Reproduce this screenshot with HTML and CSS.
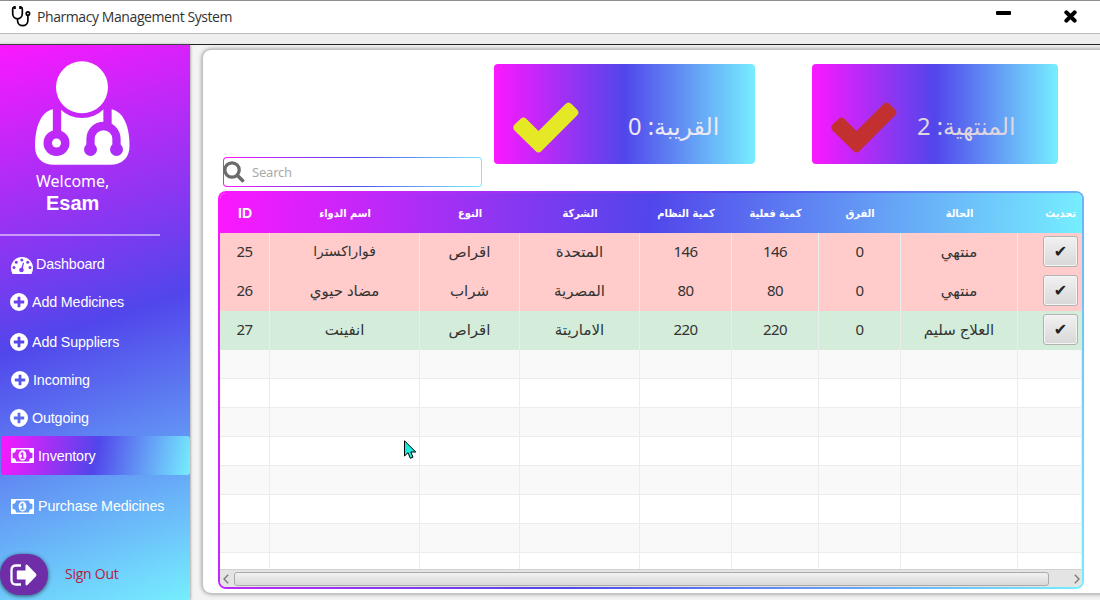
FILE: index.html
```html
<!DOCTYPE html>
<html lang="en">
<head>
<meta charset="utf-8">
<title>Pharmacy Management System</title>
<link rel="stylesheet" href="styles.css">
</head>
<body>
<svg class="defs" aria-hidden="true">
  <symbol id="plus" viewBox="0 0 18 18"><path fill-rule="evenodd" d="M9 0a9 9 0 1 1 0 18a9 9 0 0 1 0-18ZM7.600 3.800V7.600H3.800V10.400H7.600V14.200H10.400V10.400H14.200V7.600H10.400V3.800Z"/></symbol>
  <symbol id="money" viewBox="0 0 23 15"><path fill-rule="evenodd" d="M0 0H23V15H0ZM5 1.600A3.400 3.400 0 0 1 1.600 5V10A3.400 3.400 0 0 1 5 13.400H18A3.400 3.400 0 0 1 21.400 10V5A3.400 3.400 0 0 1 18 1.600Z"/><path fill-rule="evenodd" d="M11.500 2.400C14 2.400 15.400 4.900 15.400 7.500S14 12.600 11.500 12.600S7.600 10.100 7.600 7.500S9 2.400 11.500 2.400ZM11 4.300L9.200 5.900L10 6.900L10.800 6.300V9.600H9.500V10.800H13.500V9.600H12.300V4.300Z"/></symbol>
  <symbol id="check" viewBox="0 0 66 51"><path d="M8 16.500Q10.500 14.500 13 16.500L25.500 29L52.500 2Q55.500 -1 58.500 2L64 7.500Q67 10.500 64 13.500L28.500 49Q25.500 52 22.500 49L1.500 28.500Q-1 25.500 1.500 22.500Z"/></symbol>
</svg>
<div class="window">
  <header class="titlebar">
    <svg class="logo" viewBox="0 0 20 21"><g fill="none" stroke="#000" stroke-width="1.700"><path d="M4 1.500H2.400Q1.700 1.500 1.700 3V7.500C1.700 14.500 11.300 14.500 11.300 7.500V3Q11.300 1.500 10.600 1.500H9"/><path d="M6.500 12.500V14.200C6.500 21.500 16.900 21.500 16.900 14.200V9.500"/><circle cx="16.900" cy="7.500" r="1.700"/></g><path d="M2.500 0H4.800V3H2.500ZM8.200 0H10.500V3H8.200Z"/></svg>
    <span class="title">Pharmacy Management System</span>
    <span class="minimize"></span>
    <svg class="close" viewBox="0 0 12 12"><path d="M2.200 2.200L9.800 9.800M9.800 2.200L2.200 9.800" stroke="#000" stroke-width="3.800" stroke-linecap="round"/></svg>
  </header>
  <div class="strip"></div>
  <div class="body">
    <aside class="sidebar">
      <svg class="avatar" viewBox="35 61 95 104">
        <mask id="cut"><rect x="30" y="55" width="110" height="115" fill="#fff"/><circle cx="82" cy="87" r="31"/>
          <g fill="none" stroke="#000" stroke-width="8.300"><path d="M57 100V135M107.500 100V127"/><path d="M90.500 149V139A13 13 0 0 1 116.500 139V149"/></g>
          <circle cx="56.500" cy="143" r="13"/><circle cx="90.500" cy="149.500" r="6.500"/><circle cx="116.500" cy="149.500" r="6.500"/><circle cx="56.500" cy="143" r="4.500" fill="#fff"/></mask>
        <circle cx="82" cy="87.300" r="26" fill="#fff"/>
        <path mask="url(#cut)" fill="#fff" d="M54 109C40 111 35 129 35 146C35 158 42 164.700 54 164.700H110C122 164.700 129.500 158 129.500 146C129.500 129 125 111 110 109Z"/>
      </svg>
      <div class="welcome">Welcome,</div>
      <div class="user">Esam</div>
      <div class="rule"></div>
      <nav class="menu">
        <a class="item dash"><svg viewBox="0 0 22 17"><path d="M11 0A11 11 0 0 1 22 11Q22 14.500 20.500 17H1.500Q0 14.500 0 11A11 11 0 0 1 11 0Z"/><g class="holes"><circle cx="10.800" cy="3" r="1.500"/><circle cx="5.300" cy="5.300" r="1.500"/><circle cx="16.700" cy="5.300" r="1.500"/><circle cx="3" cy="10.500" r="1.500"/><circle cx="19" cy="10.500" r="1.500"/><circle cx="10.500" cy="13" r="2.300"/><path d="M10 12L12 5.500L13 6L11.500 13Z"/></g></svg>Dashboard</a>
        <a class="item meds"><svg class="round"><use href="#plus"/></svg>Add Medicines</a>
        <a class="item supp"><svg class="round"><use href="#plus"/></svg>Add Suppliers</a>
        <a class="item inc"><svg class="round"><use href="#plus"/></svg>Incoming</a>
        <a class="item out"><svg class="round"><use href="#plus"/></svg>Outgoing</a>
        <a class="item active"><svg class="bill"><use href="#money"/></svg>Inventory</a>
        <a class="item buy"><svg class="bill"><use href="#money"/></svg>Purchase Medicines</a>
      </nav>
      <div class="signout"><span class="exit"><svg viewBox="0 0 27 22"><path d="M11 1.500H6Q1.500 1.500 1.500 6V16Q1.500 20.500 6 20.500H11" fill="none" stroke="#fff" stroke-width="2.300"/><path d="M7.500 6.500H15.500V1.500Q16 0 17.500 1L26 9.800Q27 11 26 12.200L17.500 21Q16 22 15.500 20.500V15.500H7.500Q6.800 15.500 6.800 14.500V7.500Q6.800 6.500 7.500 6.500Z" fill="#fff"/></svg></span><span>Sign Out</span></div>
    </aside>
    <main class="panel">
      <div class="top">
        <div class="search"><svg viewBox="0 0 22 22"><circle cx="9" cy="9" r="7.200" fill="none" stroke="#6b6b6b" stroke-width="3.300"/><path d="M14.500 14.500L19.500 19.500" stroke="#6b6b6b" stroke-width="3.600" stroke-linecap="round"/></svg><span>Search</span></div>
        <div class="stat near"><svg><use href="#check"/></svg><span dir="rtl">القريبة: 0</span></div>
        <div class="stat expired"><svg><use href="#check"/></svg><span dir="rtl">المنتهية: 2</span></div>
      </div>
      <div class="table">
        <div class="row head"><b class="id">ID</b><b>اسم الدواء</b><b>النوع</b><b>الشركة</b><b>كمية النظام</b><b>كمية فعلية</b><b>الفرق</b><b>الحالة</b><b class="last">تحديث</b></div>
        <div class="rows">
          <div class="row bad"><span class="num">25</span><span class="long">فواراكسترا</span><span>اقراص</span><span>المتحدة</span><span class="num">146</span><span class="num">146</span><span class="num">0</span><span>منتهي</span><span class="last"><button>✔</button></span></div>
          <div class="row bad"><span class="num">26</span><span>مضاد حيوي</span><span>شراب</span><span>المصرية</span><span class="num">80</span><span class="num">80</span><span class="num">0</span><span>منتهي</span><span class="last"><button>✔</button></span></div>
          <div class="row good"><span class="num">27</span><span>انفينت</span><span>اقراص</span><span>الاماريتة</span><span class="num">220</span><span class="num">220</span><span class="num">0</span><span>العلاج سليم</span><span class="last"><button>✔</button></span></div>
          <div class="row empty"><i></i><i></i><i></i><i></i><i></i><i></i><i></i><i></i><i></i></div>
          <div class="row empty"><i></i><i></i><i></i><i></i><i></i><i></i><i></i><i></i><i></i></div>
          <div class="row empty"><i></i><i></i><i></i><i></i><i></i><i></i><i></i><i></i><i></i></div>
          <div class="row empty"><i></i><i></i><i></i><i></i><i></i><i></i><i></i><i></i><i></i></div>
          <div class="row empty"><i></i><i></i><i></i><i></i><i></i><i></i><i></i><i></i><i></i></div>
          <div class="row empty"><i></i><i></i><i></i><i></i><i></i><i></i><i></i><i></i><i></i></div>
          <div class="row empty"><i></i><i></i><i></i><i></i><i></i><i></i><i></i><i></i><i></i></div>
          <div class="row empty"><i></i><i></i><i></i><i></i><i></i><i></i><i></i><i></i><i></i></div>
        </div>
        <div class="scroll"><svg viewBox="0 0 6 10"><path d="M5.200 .8L1 5L5.200 9.200"/></svg><div class="thumb"></div><svg viewBox="0 0 6 10"><path d="M.8 .8L5 5L.8 9.200"/></svg></div>
      </div>
    </main>
  </div>
  <svg class="pointer" viewBox="0 0 13 20"><path d="M.5 .8V16L4 12.700L6.300 18.300L9 17.200L6.800 12H11.800Z" fill="#1fe8dc" stroke="#000"/></svg>
</div>
</body>
</html>
```
FILE: styles.css
```css
:root { --a: #fc18ff; --b: #5146eb; --c: #76eeff; }
* { box-sizing: border-box; }
body { margin: 0; font-family: "Noto Sans", "DejaVu Sans", sans-serif; color: #333; }
.defs { display: none; }
.window { position: relative; width: 1100px; height: 600px; overflow: hidden; display: flex; flex-direction: column; background: #f3f3f3; }
.titlebar { height: 34px; flex: none; display: flex; align-items: flex-start; background: #fff; border-top: 1px solid #8e8e8e; border-bottom: 1px solid #bbb; padding-left: 11px; }
.logo { width: 20px; height: 21px; margin-top: 5px; }
.title { flex: 1; margin-left: 6px; font-family: "Open Sans", sans-serif; font-size: 14px; line-height: 31px; letter-spacing: -.42px; white-space: nowrap; }
.minimize { width: 15px; height: 4px; border-radius: 1px; background: #000; margin: 10px 53px 0 0; }
.close { width: 13px; height: 13px; margin: 9px 23px 0 0; }
.strip { height: 11px; flex: none; background: #eee; border-bottom: 1px solid #222; }
.body { flex: 1; min-height: 0; display: flex; }
.sidebar { width: 190px; height: 555px; flex: none; background: linear-gradient(161.100deg, var(--a), var(--b) 50%, var(--c)); box-shadow: 0 0 3px #777; color: #fff; font-family: "Liberation Sans", sans-serif; display: flex; flex-direction: column; }
.avatar { width: 95px; height: 104px; margin: 16px 0 0 35px; flex: none; }
.welcome { margin: 5px 0 0 36px; font: 16px/22px "Noto Sans", sans-serif; }
.user { margin-left: 46px; font-size: 20px; font-weight: bold; line-height: 22px; }
.rule { width: 160px; height: 2px; margin-top: 20px; background: rgba(255,255,255,.5); flex: none; }
.menu { display: flex; flex-direction: column; }
.item { height: 38px; display: flex; align-items: center; padding-left: 10px; gap: 4px; font-size: 14.300px; letter-spacing: -.14px; white-space: nowrap; }
.item svg { fill: #fff; flex: none; width: 22px; height: 17px; }
.item svg.round { width: 18px; height: 18px; }
.item svg.bill { width: 23px; height: 15px; }
.item .holes { fill: #7e3bf0; }
.dash { margin-top: 9px; padding-left: 11px; gap: 3px; }
.dash svg { margin-top: 2px; }
.supp { margin-top: 2px; }
.inc { padding-left: 11px; }
.active { margin: -1px 0 0 1px; height: 39px; border-radius: 3px; background: linear-gradient(101.500deg, var(--a), var(--b) 50%, var(--c)); }
.buy { padding-left: 11px; margin-top: 12px; }
.signout { display: flex; align-items: center; gap: 17px; margin-top: 29px; font: 14px "Open Sans", sans-serif; letter-spacing: -.25px; color: #b4213f; }
.signout > span + span { margin-top: -2px; }
.exit { width: 48px; height: 41px; border-radius: 20px; background: #6f2da8; box-shadow: 0 1px 4px rgba(0,0,0,.6); display: flex; align-items: center; justify-content: center; }
.exit svg { width: 27px; height: 22px; margin-right: 2px; }
.panel { width: 920px; height: 545px; flex: none; margin: 4px 0 0 12px; padding: 14px 0 0 15px; background: #fff; border: 1px solid #c2c2c2; border-radius: 9px; box-shadow: 0 0 4px rgba(0,0,0,.4); }
.top { display: flex; height: 127px; padding-left: 5px; }
.search { width: 259px; height: 30px; margin: 93px 12px 0 0; display: flex; border: 1px solid transparent; border-radius: 4px; background: linear-gradient(#fff, #fff) padding-box, linear-gradient(97deg, var(--a), var(--b) 50%, var(--c)) border-box; font-size: 13px; line-height: 29px; letter-spacing: -.2px; color: #aaa; }
.search svg { width: 22px; height: 22px; margin: 3px 7px 0 -1px; }
.stat { width: 261px; height: 100px; flex: none; border-radius: 4px; background: linear-gradient(90deg, var(--a), var(--b) 50%, var(--c)); display: flex; padding-left: 19px; font-size: 23.700px; line-height: 34px; }
.stat svg { width: 66px; height: 51px; margin: 38px 0 0; }
.stat span { margin: 45px 0 0 49px; white-space: nowrap; color: #eee8f5; }
.near svg { fill: #e4e825; }
.expired { width: 246px; margin-left: 57px; }
.expired svg { fill: #c23030; }
.expired span { margin-left: 20px; color: #ded5df; }
.table { width: 866px; height: 398px; border: 2px solid transparent; border-radius: 8px; overflow: hidden; display: flex; flex-direction: column; background: linear-gradient(#fff, #fff) padding-box, linear-gradient(114.700deg, var(--a), var(--b) 50%, var(--c)) border-box; }
.row { display: grid; grid-template-columns: 50px 150px 100px 120px 92px 87px 82px 117px 1fr; }
.row > * { display: flex; align-items: center; justify-content: center; white-space: nowrap; border-right: 1px solid #ececec; }
.head { height: 40px; flex: none; background: linear-gradient(92.700deg, var(--a), var(--b) 50%, var(--c)); color: #fff; font: bold 11px "DejaVu Sans Condensed", "DejaVu Sans", sans-serif; }
.head .id { font: bold 14px "Liberation Sans", sans-serif; }
.head > * { border: 0; }
.row .last { border: 0; justify-content: flex-end; padding-right: 4px; }
.head .last { padding-right: 6px; }
.rows { flex: 1; min-height: 0; overflow: hidden; }
.bad, .good { height: 39px; font-size: 15px; }
.bad > *, .good > * { padding-bottom: 4px; }
.row .num { letter-spacing: -.5px; }
.row .long { font-size: 13.800px; }
.bad { background: #ffcccb; }
.good { background: #d4edda; }
.empty { height: 29px; border-bottom: 1px solid #ececec; }
.empty:nth-child(even) { background: #f9f9f9; }
.bad .last, .good .last { padding-bottom: 0; }
button { width: 35px; height: 31px; padding: 0; border: 1px solid #b2b2b2; border-radius: 3px; background: linear-gradient(#f1f1f1, #d8d8d8); box-shadow: inset 0 0 0 1px #f5f5f5; font: 16px "DejaVu Sans", sans-serif; color: #222; margin-top: -2px; }
.scroll { height: 18px; flex: none; display: flex; align-items: center; padding: 0 2px 0 3px; background: #e4e4e4; border-top: 1px solid #d2d2d2; }
.scroll svg { width: 6px; height: 10px; fill: none; stroke: #777; stroke-width: 1.300; }
.thumb { width: 815px; height: 14px; margin: 0 auto 0 5px; border: 1px solid #aaa; border-radius: 3px; background: linear-gradient(#f2f2f2, #d9d9d9); }
.pointer { position: absolute; left: 404px; top: 440px; width: 13px; height: 20px; }
```
